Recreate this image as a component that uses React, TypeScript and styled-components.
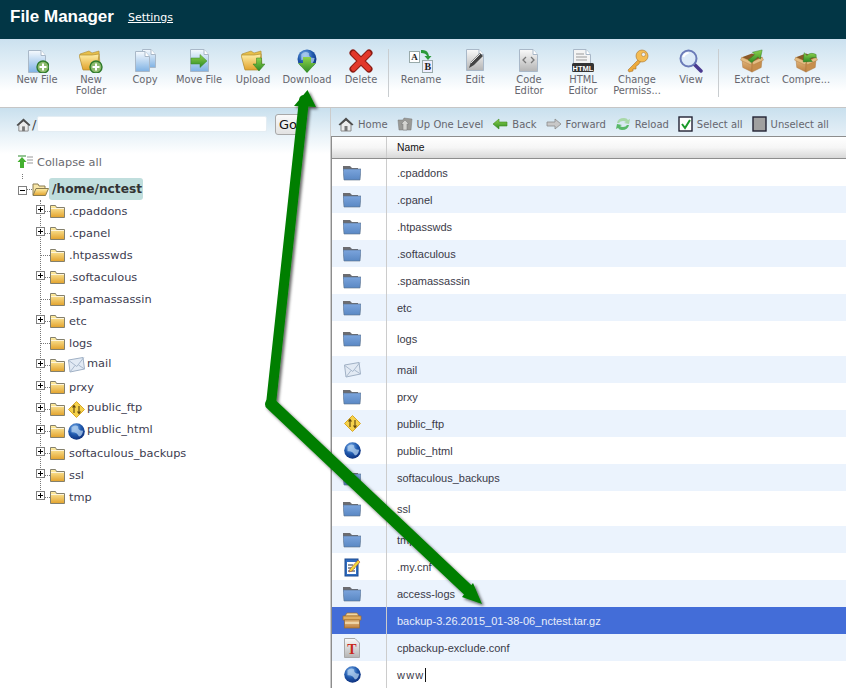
import React from "react";
import styled, { createGlobalStyle } from "styled-components";

const Global = createGlobalStyle`
  html, body { margin: 0; padding: 0; background: #fff; }
  * { box-sizing: border-box; }
`;

const Page = styled.div`
  position: relative; width: 846px; height: 688px; overflow: hidden; background: #fff;
  font-family: "DejaVu Sans", Verdana, sans-serif; display: flex; flex-direction: column;
`;
const Header = styled.header`
  height: 39px; background: #023645; display: flex; align-items: center; padding: 0 0 6px 10px; gap: 14px; flex: none;
`;
const Title = styled.h1`margin: 0; font: bold 17px "Liberation Sans", Arial, sans-serif; color: #fff;`;
const SettingsLink = styled.a`font-size: 11px; color: #fff; text-decoration: underline; margin-top: 1px;`;
const Toolbar = styled.nav`
  height: 69px; flex: none; display: flex; padding: 10px 0 0 10px; border-bottom: 1px solid #c6c6c6;
  background: linear-gradient(#cbe1ef 0, #e6f1f8 30px, #fff 52px);
`;
const ToolItem = styled.div`
  width: 54px; display: flex; flex-direction: column; align-items: center; flex: none;
  font-size: 9.9px; line-height: 11px; color: #66666e; text-align: center;
  & > svg { flex: none; margin-bottom: 1px; }
`;
const ToolLabel = styled.span`display: block; max-width: 52px;`;
const ToolSep = styled.div<{ $after: number }>`
  width: 1px; height: 48px; background: #c9cdd0; margin-right: ${p => p.$after}px; flex: none;
`;
const Main = styled.main`display: flex; flex: 1; min-height: 0;`;
const Tree = styled.aside`
  width: 330px; flex: none; background: linear-gradient(#c9e0ee 0, #e8f2f8 26px, #fff 46px) top / 100% 50px no-repeat;
  display: flex; flex-direction: column; padding-top: 6px; color: #3c3c50;
`;
const AddressBar = styled.div`display: flex; align-items: center; padding-left: 16px; height: 20px;`;
const Slash = styled.span`font-size: 13px; color: #444; margin-left: 1px; width: 5px;`;
const PathInput = styled.div`width: 230px; height: 16px; background: #fff; border-radius: 2px; border: 1px solid #e4edf3;`;
const GoButton = styled.button`
  margin-left: 8px; width: 26px; height: 21px; padding: 0; border: 1px solid #a8a8a8; border-radius: 3px;
  background: linear-gradient(#fafafa, #e2e2e2); font: 13px "DejaVu Sans", sans-serif; color: #111; text-align: left; padding-left: 3px;
`;
const Collapse = styled.div`display: flex; align-items: center; gap: 4px; margin: 21px 0 0 17px; height: 14px; color: #6a6a70; font-size: 11.3px;`;
const RootRow = styled.div`display: flex; align-items: center; height: 22px; margin: 9px 0 0 18px;`;
const RootToggle = styled.span`
  position: relative; display: block;
  &::before { content: ""; position: absolute; left: 4px; top: -6px; height: 5px; border-left: 1px dotted #777; }
`;
const RootLabel = styled.span`
  background: #c0dedd; border-radius: 3px; height: 22px; line-height: 22px; padding: 0 0 0 3px; width: 94px;
  font-weight: bold; font-size: 12.2px; color: #333; white-space: nowrap;
`;
const Stub = styled.span<{ $w: number; $ml?: number }>`
  display: block; flex: none; width: ${p => p.$w}px; margin-left: ${p => p.$ml ?? 0}px; border-top: 1px dotted #777;
`;
const Children = styled.div`
  position: relative; margin-left: 36px; display: flex; flex-direction: column;
  &::before { content: ""; position: absolute; left: 4px; top: 0; bottom: 16px; border-left: 1px dotted #777; }
`;
const TreeRow = styled.div`display: flex; align-items: center; height: 22px; position: relative;`;
const ToggleSlot = styled.span`
  display: flex; align-items: center; flex: none; margin-top: -3px; position: relative; z-index: 1;
`;
const TreeFolder = styled.span`display: flex; flex: none; margin-right: 4px;`;
const TreeBadge = styled.span`display: flex; flex: none; margin: 0 2px 0 -1px;`;
const TreeLabel = styled.span<{ $raised?: boolean }>`
  white-space: nowrap; font-size: 11.35px; padding-bottom: ${p => (p.$raised ? 4 : 0)}px;
`;
const Files = styled.section`
  flex: 1; min-width: 0; border-left: 1px solid #ccc; display: flex; flex-direction: column;
  background: linear-gradient(#c9e0ee 0, #e6f0f7 28px) top / 100% 28px no-repeat;
`;
const FileNav = styled.div`
  height: 28px; flex: none; display: flex; align-items: center; padding: 4px 0 0 7px; gap: 9px; font-size: 10px; color: #66666e;
`;
const NavItem = styled.span`display: flex; align-items: center; gap: 4px; white-space: nowrap;`;
const Table = styled.div`flex: 1; border-left: 1px solid #8d8d8d; font-family: "Liberation Sans", Arial, sans-serif; display: flex; flex-direction: column;`;
const HeadRow = styled.div`
  height: 23px; flex: none; display: flex; border-top: 1px solid #8d8d8d; border-bottom: 1px solid #8d8d8d;
  background: linear-gradient(#fff 0, #f6f6f6 50%, #d8d8d8 100%); font-size: 10.3px; color: #111;
`;
const IconCell = styled.div`
  width: 55px; flex: none; display: flex; align-items: center; justify-content: center; border-right: 1px solid #ccc; padding-right: 14px;
`;
const NameCell = styled.div`flex: 1; display: flex; align-items: center; padding-left: 10px; white-space: nowrap;`;
const Row = styled.div<{ $tall?: boolean; $alt?: boolean; $sel?: boolean }>`
  height: ${p => (p.$tall ? 35 : 27)}px; flex: none; display: flex; font-size: 11px;
  background: ${p => (p.$sel ? "#436dd8" : p.$alt ? "#ebf3fd" : "#fff")};
  color: ${p => (p.$sel ? "#e8eefa" : "#3a3a48")};
`;
const Caret = styled.span`display: inline-block; width: 1px; height: 14px; background: #111; margin-left: 1px;`;
const Wide = styled.span`letter-spacing: 1.2px;`;
const ArrowLayer = styled.svg`position: absolute; left: 0; top: 0; pointer-events: none;`;
const DefsHolder = styled.svg`position: absolute; width: 0; height: 0;`;

const Defs = () => (
  <DefsHolder aria-hidden="true">
    <defs>
      <linearGradient id="gDoc" x1="0" y1="0" x2="0" y2="1"><stop offset="0" stopColor="#f6fafe" /><stop offset="1" stopColor="#7fb2e4" /></linearGradient>
      <linearGradient id="gGrey" x1="0" y1="0" x2="0" y2="1"><stop offset="0" stopColor="#fafafa" /><stop offset="1" stopColor="#b4b4b4" /></linearGradient>
      <linearGradient id="gYel" x1="0" y1="0" x2="0" y2="1"><stop offset="0" stopColor="#fff0a8" /><stop offset="1" stopColor="#e2a22c" /></linearGradient>
      <linearGradient id="gGreen" x1="0" y1="0" x2="0" y2="1"><stop offset="0" stopColor="#8fd24c" /><stop offset="1" stopColor="#2c8a24" /></linearGradient>
      <linearGradient id="gBlue" x1="0" y1="0" x2="0" y2="1"><stop offset="0" stopColor="#7ba4dc" /><stop offset="1" stopColor="#5a88c4" /></linearGradient>
      <linearGradient id="gBox" x1="0" y1="0" x2="0" y2="1"><stop offset="0" stopColor="#e8c088" /><stop offset="1" stopColor="#bd8040" /></linearGradient>
      <radialGradient id="gGlobe" cx="0.4" cy="0.3" r="0.8"><stop offset="0" stopColor="#7fb4ee" /><stop offset="0.5" stopColor="#1f58ac" /><stop offset="1" stopColor="#0a2670" /></radialGradient>
      <filter id="arrowShadow" x="-20%" y="-20%" width="140%" height="140%"><feDropShadow dx="2" dy="2" stdDeviation="1.4" floodColor="#000" floodOpacity="0.6" /></filter>
    </defs>
  </DefsHolder>
);

type IP = { children: React.ReactNode; w?: number; h?: number; vw?: number; vh?: number };
const Ic = ({ children, w = 24, h = 24, vw, vh }: IP) => (
  <svg width={w} height={h} viewBox={`0 0 ${vw ?? w} ${vh ?? h}`} aria-hidden="true">{children}</svg>
);

const DocShape = ({ x = 0, y = 0, w = 17, h = 22, fill = "url(#gDoc)" }: { x?: number; y?: number; w?: number; h?: number; fill?: string }) => (
  <g transform={`translate(${x} ${y})`}>
    <path d={`M.5 .5H${w - 5}L${w - .5} 5.5V${h - .5}H.5Z`} fill={fill} stroke="#a9b8c8" />
    <path d={`M${w - 5} .5V5.5H${w - .5}`} fill="#fff" stroke="#a9b8c8" />
  </g>
);
const PlusBadge = ({ cx = 17, cy = 17 }: { cx?: number; cy?: number }) => (
  <g>
    <circle cx={cx} cy={cy} r="6" fill="#8cba6c" stroke="#2f7a2a" strokeWidth="1.4" />
    <path d={`M${cx - 3.5} ${cy}h7M${cx} ${cy - 3.5}v7`} stroke="#fff" strokeWidth="2" />
  </g>
);
const YFolderBig = () => (
  <g>
    <path d="M1 5l9-3 3 2 7-2 1 14-17 4z" fill="#e7bf4a" stroke="#a88a3a" strokeWidth=".6" />
    <path d="M0 6h13l7-1-2 16-14 0z" fill="url(#gYel)" stroke="#b08d32" strokeWidth=".7" />
  </g>
);
const DownArrow = ({ x, y }: { x: number; y: number }) => (
  <path transform={`translate(${x} ${y})`} d="M3.500 0h5v6h3.500L6 13 0 6h3.500z" fill="url(#gGreen)" stroke="#2c7a24" strokeWidth=".5" />
);
const GlobeShape = ({ c, cy, r }: { c: number; cy: number; r: number }) => (
  <g>
    <circle cx={c} cy={cy} r={r} fill="url(#gGlobe)" />
    <path d={`M${c - r * .6} ${cy - r * .5}q${r * .4} ${-r * .4} ${r * .8} ${-r * .1}q${-r * .1} ${r * .5} ${r * .6} ${r * .5}q${-r * .1} ${r * .6} ${-r * .5} ${r * .7}q${-r * .3} ${-r * .6} ${-r * .9} ${-r * .5}z`} fill="#b4d0ee" opacity=".75" />
  </g>
);
const BoxShape = () => (
  <g>
    <path d="M2 9l11-4 11 4-11 6z" fill="#8a5a28" />
    <path d="M2 9l11 5v11L3 20z" fill="url(#gBox)" stroke="#a8743a" strokeWidth=".5" />
    <path d="M24 9l-11 5v11l10-5z" fill="#c68e4c" stroke="#a8743a" strokeWidth=".5" />
    <path d="M2 9l-1.500 3 11 5 2.500-3zM24 9l1.500 3-11 5-1.500-3z" fill="#e4bd84" stroke="#a8743a" strokeWidth=".4" />
  </g>
);

const tools: Record<string, React.ReactNode> = {
  newFile: <Ic><DocShape x={3} y={1} w={18} h={23} /><PlusBadge cx={18} cy={18} /></Ic>,
  newFolder: <Ic w={24}><YFolderBig /><PlusBadge cx={17} cy={18} /></Ic>,
  copy: <Ic><DocShape x={9} y={0} w={14} h={19} /><DocShape x={2} y={2} w={15} h={21} /></Ic>,
  move: <Ic><DocShape x={3} y={0} w={19} h={23} /><path d="M4 9h9V5.500l7 6.500-7 6.500V15H4z" fill="url(#gGreen)" stroke="#3a8a2a" strokeWidth=".5" /></Ic>,
  upload: <Ic><YFolderBig /><DownArrow x={12} y={9} /></Ic>,
  download: <Ic><GlobeShape c={12} cy={10} r={9.500} /><path d="M8 8h8v6h5l-9 10-9-10h5z" fill="url(#gGreen)" /></Ic>,
  del: <Ic><path d="M4 4l16 16M20 4L4 20" stroke="#8c1c14" strokeWidth="7" strokeLinecap="round" /><path d="M4.500 4.500l15 15M19.500 4.500l-15 15" stroke="#e2382a" strokeWidth="5" strokeLinecap="round" /></Ic>,
  rename: <Ic><rect x=".5" y="2.500" width="10" height="11" fill="#fff" stroke="#9aa" /><text x="2.300" y="11" fontSize="9" fontWeight="bold" fontFamily="Liberation Serif" fill="#222">A</text><rect x="13.500" y="11.500" width="10" height="12" fill="#eef" stroke="#9aa" /><text x="15.500" y="21" fontSize="10" fontWeight="bold" fontFamily="Liberation Serif" fill="#222">B</text><path d="M12 1q7-1 8 6h2.500l-3.500 4-3.500-4H18q-1-3-6-3z" fill="#2a9a3a" /></Ic>,
  edit: <Ic><DocShape x={3} y={0} w={18} h={22} fill="url(#gGrey)" /><path d="M6 19l2-6 9-9 3 3-9 9z" fill="#444" /><path d="M8 14l9-9" stroke="#ddd" strokeWidth="1" /></Ic>,
  code: <Ic><DocShape x={2} y={0} w={19} h={23} fill="url(#gGrey)" /><path d="M9 8l-3 3 3 3M14 8l3 3-3 3" fill="none" stroke="#777" strokeWidth="1.300" /></Ic>,
  html: <Ic><DocShape x={2} y={0} w={18} h={16} fill="#f4f4f4" /><path d="M5 5h8M5 8h11M5 11h11" stroke="#999" /><rect x="1" y="14" width="22" height="9" rx="1.500" fill="#333" /><text x="12" y="21.500" textAnchor="middle" fontSize="7.500" fontWeight="bold" fontFamily="Liberation Sans" fill="#fff">HTML</text></Ic>,
  key: <Ic><path d="M15 9L3 21l1 2 4-1v-2h3v-3l2-1 4-5z" fill="#eeab3c" stroke="#a8722a" strokeWidth=".6" /><circle cx="17" cy="7" r="6" fill="#f4bc54" stroke="#a8722a" strokeWidth=".6" /><circle cx="18.500" cy="5.500" r="2" fill="#e8eef4" stroke="#a8722a" strokeWidth=".5" /></Ic>,
  view: <Ic><path d="M15 15l7 7" stroke="#4a3a90" strokeWidth="3.500" strokeLinecap="round" /><circle cx="9.500" cy="9.500" r="8" fill="#dceaf8" stroke="#6a7ab8" strokeWidth="2" /><path d="M4.500 8q1-3.500 5-4" fill="none" stroke="#fff" strokeWidth="2" /></Ic>,
  extract: <Ic vw={26} vh={26} w={24} h={24}><BoxShape /><path d="M9 12l7-6-2.500-2.500L24 1l-2 10-2.500-2.500-7 6.500z" fill="url(#gGreen)" stroke="#2c7a24" strokeWidth=".5" /></Ic>,
  compress: <Ic vw={26} vh={26} w={24} h={24}><BoxShape /><path d="M24 6q-6-3-10 1L11 4l-1 10 10-.500-3-3q3-2 7-1z" fill="url(#gGreen)" stroke="#2c7a24" strokeWidth=".5" /></Ic>,
};

const HomeIcon = ({ s = 16 }: { s?: number }) => (
  <Ic w={s} h={s} vw={16} vh={16}><path d="M3 8l5-4 5 4v7H3z" fill="#ececec" stroke="#8a8a8a" /><path d="M.5 8.500L8 1.500l7.500 7-1.500 1L8 4.500 2 9.500z" fill="#4e4e4e" /><rect x="6.500" y="10" width="3" height="5" fill="#777" /></Ic>
);
const UpIcon = () => <Ic w={16} h={16}><path d="M1 4h5l1-2 8 1-1 11H2z" fill="#9a9a96" stroke="#777" strokeWidth=".5" /><path d="M8 4l4 4H10v6H6V8H4z" fill="#d4d4d0" stroke="#777" strokeWidth=".5" /></Ic>;
const BackIcon = () => <Ic w={16} h={16}><path d="M1 8l6-5v3h8v4H7v3z" fill="url(#gGreen)" stroke="#3f8c1e" strokeWidth=".6" /></Ic>;
const ForwardIcon = () => <Ic w={16} h={16}><path d="M15 8L9 3v3H1v4h8v3z" fill="#c8c8c8" stroke="#8a8a8a" strokeWidth=".8" /></Ic>;
const ReloadIcon = () => <Ic w={16} h={16}><path d="M2 7q1-5 7-5 3 0 4 2l2-1-1 5-5-1 2-1q-1-1-3-1-3 0-4 2z" fill="#a8d8a8" /><path d="M14 9q-1 5-7 5-3 0-4-2l-2 1 1-5 5 1-2 1q1 1 3 1 3 0 4-2z" fill="#58b868" /></Ic>;
const CheckOn = () => <Ic w={15} h={16}><rect x="1" y="1" width="13" height="14" fill="#fff" stroke="#223" strokeWidth="1.400" /><path d="M4 8l3 4 5-8" fill="none" stroke="#1a9a2a" strokeWidth="2" /></Ic>;
const CheckOff = () => <Ic w={15} h={16}><rect x="1" y="1" width="13" height="14" fill="#a0a0a0" stroke="#223" strokeWidth="1.400" /></Ic>;

const ToggleBox = ({ open }: { open?: boolean }) => (
  <Ic w={9} h={9}><rect x=".5" y=".5" width="8" height="8" fill="#fff" stroke="#808080" /><path d={open ? "M2 4.500h5" : "M2 4.500h5M4.500 2v5"} stroke="#000" /></Ic>
);
const TFolder = () => (
  <Ic w={15} h={14}><path d="M.5 3V1.500h5l1 2h8V13.500H.5z" fill="url(#gYel)" stroke="#84806c" /><path d="M1 4.500h13" stroke="#fff" strokeOpacity=".7" /></Ic>
);
const TOpenFolder = () => (
  <Ic w={17} h={15}><path d="M1 13V2h5l1 2h6v3" fill="#f8e6a8" stroke="#8a7c50" /><path d="M1 13.500l3-7h12.500l-3 7z" fill="url(#gYel)" stroke="#8a7c50" /></Ic>
);
const MailIcon = () => <Ic w={17} h={16}><path d="M.5 3L15 .5l1.500 11.500L2 15z" fill="#e2eaf4" stroke="#a0b0c4" /><path d="M.8 3.500l8 6 7-9M2 15l5-6.500M16.500 12l-6-4" fill="none" stroke="#a8b8cc" /></Ic>;
const FtpIcon = () => <Ic w={17} h={17}><path d="M8.500 .5l8 8-8 8-8-8z" fill="#f6d24a" stroke="#d8a828" /><path d="M6 12V5M4.500 6.500L6 4.500l1.500 2M11 5v7M9.500 10.500L11 12.500l1.500-2" fill="none" stroke="#5c4410" strokeWidth="1.100" /></Ic>;
const GlobeIcon = () => <Ic w={17} h={17}><GlobeShape c={8.500} cy={8.500} r={8.300} /></Ic>;
const BlueFolder = () => <Ic w={18} h={16}><path d="M0 3V1h7l2 2h6v3H0z" fill="#6c6c70" /><path d="M0 4h18l-1 11H1z" fill="url(#gBlue)" stroke="#5a6e88" strokeWidth=".6" /></Ic>;
const NoteIcon = () => <Ic w={17} h={20}><rect x="1" y="2" width="13" height="17" fill="#2f6cc0" stroke="#1c4a90" /><rect x="3" y="5" width="9" height="12" fill="#fff" /><path d="M4 8h5M4 11h7M4 14h7" stroke="#234" /><path d="M6 12l8-9 2 2-8 9-3 1z" fill="#f2d83a" stroke="#a03030" strokeWidth=".5" /></Ic>;
const ArchiveIcon = () => <Ic w={20} h={17}><path d="M3 4l2-3h10l2 3z" fill="#f2d8a4" stroke="#a06c2a" strokeWidth=".7" /><rect x="1" y="4" width="18" height="4" fill="#e0ad62" stroke="#a06c2a" strokeWidth=".7" /><rect x="2.500" y="8" width="15" height="8" fill="url(#gBox)" stroke="#a06c2a" strokeWidth=".7" /><path d="M3 11h14" stroke="#f6e2b8" strokeWidth="1.500" /></Ic>;
const TextFileIcon = () => <Ic w={16} h={20}><path d="M.5 .5H11L15.500 5V19.500H.5z" fill="url(#gGrey)" stroke="#a8a8a8" /><text x="8" y="16" textAnchor="middle" fontSize="14" fontWeight="bold" fontFamily="Liberation Serif" fill="#c8281c">T</text></Ic>;
const CollapseIcon = () => <Ic w={16} h={14}><path d="M1 1h8" stroke="#2a8a2a" /><path d="M5 2l4.500 5H7v6H3V7H.5z" fill="#44b030" /><path d="M10 2h6M10 5h6M10 8h6" stroke="#999" /></Ic>;

type Tool = { l: string; i: string } | { sep: number };
const toolList: Tool[] = [
  { l: "New File", i: "newFile" }, { l: "New Folder", i: "newFolder" }, { l: "Copy", i: "copy" }, { l: "Move File", i: "move" },
  { l: "Upload", i: "upload" }, { l: "Download", i: "download" }, { l: "Delete", i: "del" }, { sep: 5 },
  { l: "Rename", i: "rename" }, { l: "Edit", i: "edit" }, { l: "Code Editor", i: "code" }, { l: "HTML Editor", i: "html" },
  { l: "Change Permiss...", i: "key" }, { l: "View", i: "view" }, { sep: 6 }, { l: "Extract", i: "extract" }, { l: "Compre...", i: "compress" },
];

const treeList: { n: string; plus: boolean; badge?: React.ReactNode }[] = [
  { n: ".cpaddons", plus: true }, { n: ".cpanel", plus: true }, { n: ".htpasswds", plus: false }, { n: ".softaculous", plus: true },
  { n: ".spamassassin", plus: false }, { n: "etc", plus: true }, { n: "logs", plus: false },
  { n: "mail", plus: true, badge: <MailIcon /> }, { n: "prxy", plus: true }, { n: "public_ftp", plus: true, badge: <FtpIcon /> },
  { n: "public_html", plus: true, badge: <GlobeIcon /> }, { n: "softaculous_backups", plus: true }, { n: "ssl", plus: true }, { n: "tmp", plus: true },
];

const rows: { n: React.ReactNode; ic: React.ReactNode; tall?: boolean; alt?: boolean; sel?: boolean }[] = [
  { n: ".cpaddons", ic: <BlueFolder /> }, { n: ".cpanel", ic: <BlueFolder />, alt: true }, { n: ".htpasswds", ic: <BlueFolder /> },
  { n: ".softaculous", ic: <BlueFolder />, alt: true }, { n: ".spamassassin", ic: <BlueFolder /> }, { n: "etc", ic: <BlueFolder />, alt: true },
  { n: "logs", ic: <BlueFolder />, tall: true }, { n: "mail", ic: <MailIcon />, alt: true }, { n: "prxy", ic: <BlueFolder /> },
  { n: "public_ftp", ic: <FtpIcon />, alt: true }, { n: "public_html", ic: <GlobeIcon /> }, { n: "softaculous_backups", ic: <BlueFolder />, alt: true },
  { n: "ssl", ic: <BlueFolder />, tall: true }, { n: "tmp", ic: <BlueFolder />, alt: true }, { n: ".my.cnf", ic: <NoteIcon /> },
  { n: "access-logs", ic: <BlueFolder />, alt: true }, { n: "backup-3.26.2015_01-38-06_nctest.tar.gz", ic: <ArchiveIcon />, sel: true },
  { n: "cpbackup-exclude.conf", ic: <TextFileIcon />, alt: true }, { n: <><Wide>www</Wide><Caret /></>, ic: <GlobeIcon /> },
];

const navItems: [React.ReactNode, string][] = [
  [<HomeIcon />, "Home"], [<UpIcon />, "Up One Level"], [<BackIcon />, "Back"], [<ForwardIcon />, "Forward"],
  [<ReloadIcon />, "Reload"], [<CheckOn />, "Select all"], [<CheckOff />, "Unselect all"],
];

export default function App() {
  return (
    <Page>
      <Global />
      <Defs />
      <Header>
        <Title>File Manager</Title>
        <SettingsLink>Settings</SettingsLink>
      </Header>
      <Toolbar>
        {toolList.map((t, i) =>
          "sep" in t ? <ToolSep key={i} $after={t.sep} /> : (
            <ToolItem key={i}>{tools[t.i]}<ToolLabel>{t.l}</ToolLabel></ToolItem>
          )
        )}
      </Toolbar>
      <Main>
        <Tree>
          <AddressBar>
            <HomeIcon s={15} />
            <Slash>/</Slash>
            <PathInput />
            <GoButton>Go</GoButton>
          </AddressBar>
          <Collapse><CollapseIcon />Collapse all</Collapse>
          <RootRow>
            <RootToggle><ToggleBox open /></RootToggle>
            <Stub $w={5} />
            <TOpenFolder />
            <RootLabel>/home/nctest</RootLabel>
          </RootRow>
          <Children>
            {treeList.map(t => (
              <TreeRow key={t.n}>
                {t.plus ? (
                  <>
                    <ToggleSlot><ToggleBox /></ToggleSlot>
                    <Stub $w={5} />
                  </>
                ) : <Stub $w={10} $ml={4} />}
                <TreeFolder><TFolder /></TreeFolder>
                {t.badge && <TreeBadge>{t.badge}</TreeBadge>}
                <TreeLabel $raised={!!t.badge}>{t.n}</TreeLabel>
              </TreeRow>
            ))}
          </Children>
        </Tree>
        <Files>
          <FileNav>
            {navItems.map(([ic, l]) => <NavItem key={l}>{ic}{l}</NavItem>)}
          </FileNav>
          <Table>
            <HeadRow>
              <IconCell />
              <NameCell>Name</NameCell>
            </HeadRow>
            {rows.map((r, i) => (
              <Row key={i} $tall={r.tall} $alt={r.alt} $sel={r.sel}>
                <IconCell>{r.ic}</IconCell>
                <NameCell>{r.n}</NameCell>
              </Row>
            ))}
          </Table>
        </Files>
      </Main>
      <ArrowLayer width={846} height={688} viewBox="0 0 846 688" aria-hidden="true">
        <g filter="url(#arrowShadow)">
          <path d="M304 100L271 404" fill="none" stroke="#007f00" strokeWidth="10" strokeLinecap="round" />
          <path d="M271 404L470 592" fill="none" stroke="#007f00" strokeWidth="12" strokeLinecap="round" />
          <path d="M307.500 90L294 106L316 107z" fill="#007f00" />
          <path d="M482 604L462 597L473 583z" fill="#007f00" />
        </g>
      </ArrowLayer>
    </Page>
  );
}
